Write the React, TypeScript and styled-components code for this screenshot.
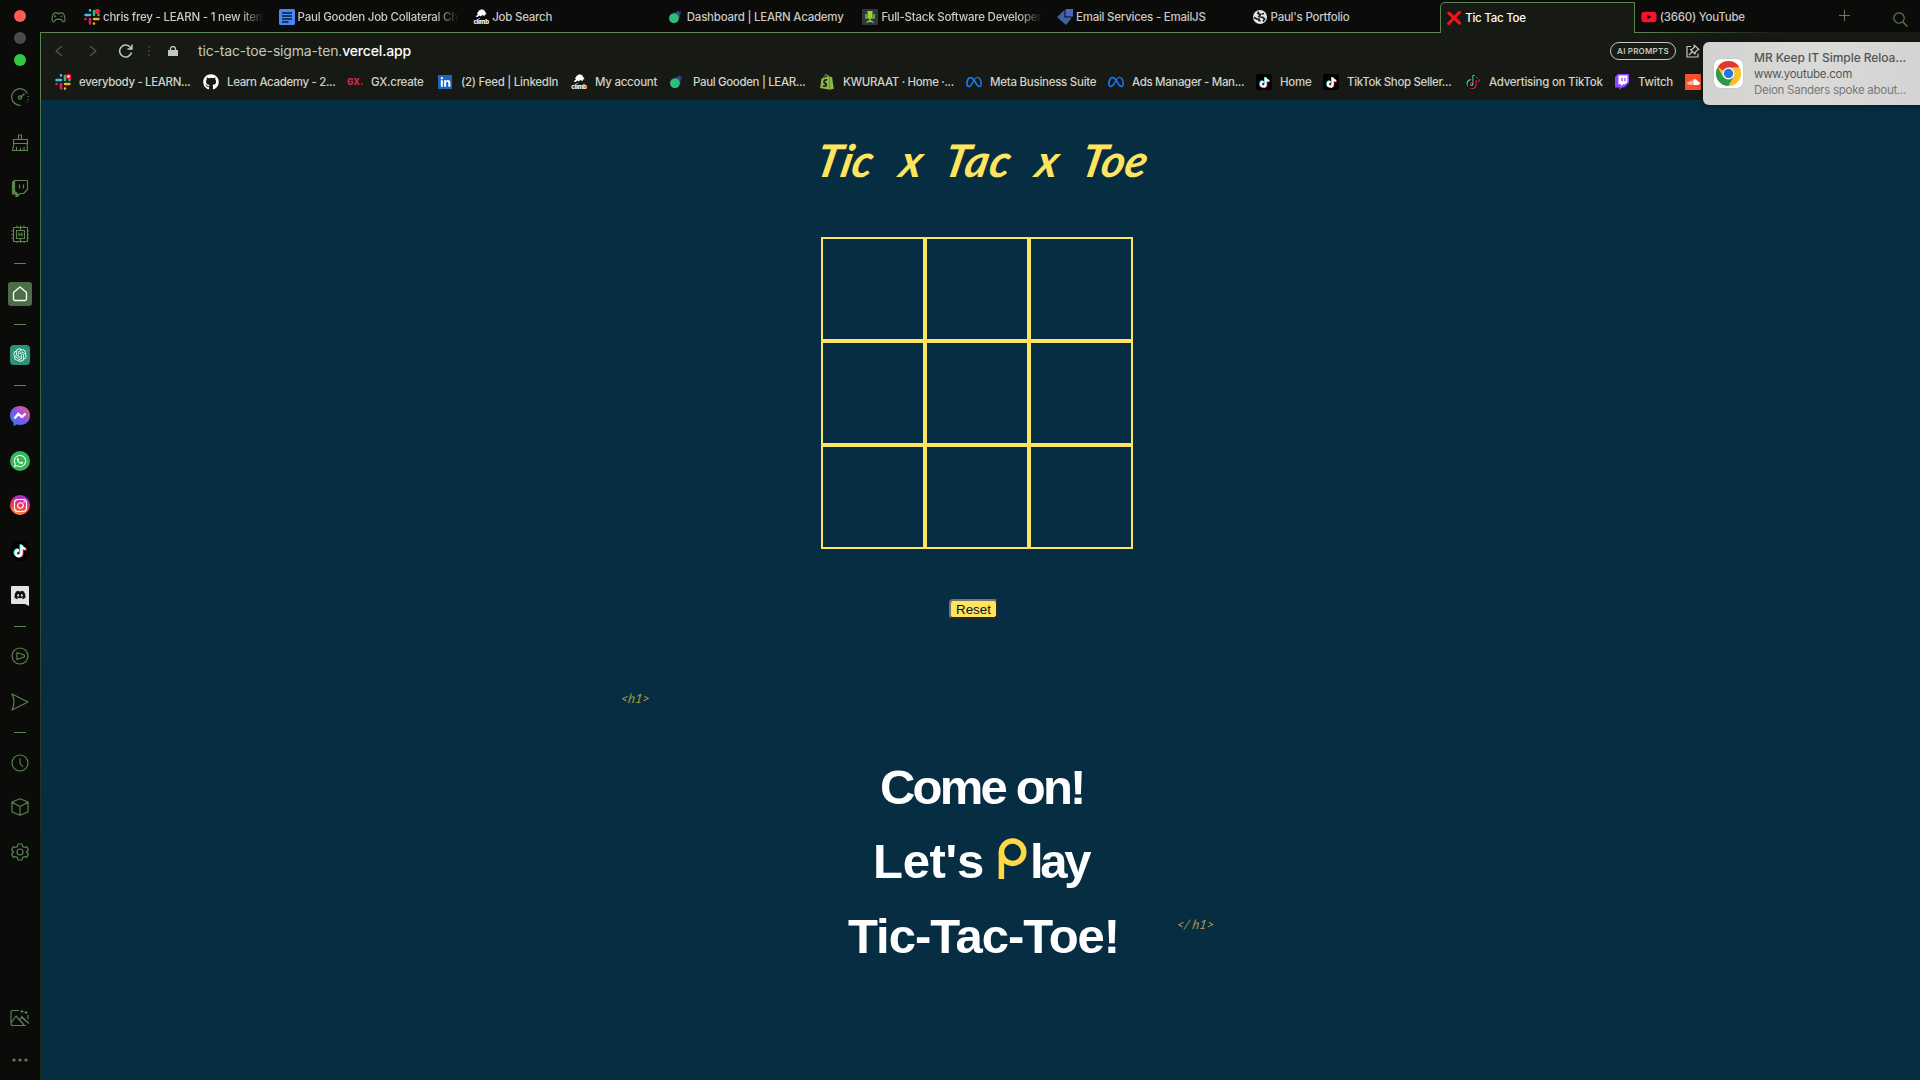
import React from 'react';
import styled, { createGlobalStyle } from 'styled-components';
import { FaGithub, FaLinkedinIn, FaSoundcloud, FaShopify, FaWhatsapp, FaInstagram, FaDiscord, FaYoutube, FaMeta } from 'react-icons/fa6';
import { RiOpenaiFill } from 'react-icons/ri';

const GREEN = '#5a8750';
const YELLOW = '#ffe45f';

const Global = createGlobalStyle`
  * { box-sizing: border-box; }
  html, body { margin: 0; padding: 0; background: #0b0b09; overflow: hidden; }
  body { font-family: Inter, Roboto, sans-serif; }
  svg { display: block; flex: none; }
`;

const Window = styled.div`
  display: grid;
  grid-template-columns: 40px 1fr;
  width: 1920px;
  height: 1080px;
  background: #0b0b09;
  position: relative;
  overflow: hidden;
`;
const Sidebar = styled.aside`
  display: flex;
  flex-direction: column;
  align-items: center;
  padding-top: 10px;
`;
const Light = styled.i<{ $color: string }>`
  width: 12px;
  height: 12px;
  border-radius: 50%;
  margin-bottom: 10px;
  background: ${p => p.$color};
  flex: none;
`;
const SideItem = styled.div<{ $gap: number; $bg?: string; $size?: number; $round?: string; $fg?: string }>`
  display: flex;
  align-items: center;
  justify-content: center;
  flex: none;
  margin-top: ${p => p.$gap}px;
  width: ${p => p.$size || 20}px;
  height: ${p => p.$size || 20}px;
  border-radius: ${p => p.$round || '0'};
  background: ${p => p.$bg || 'transparent'};
  color: ${p => p.$fg || GREEN};
`;
const Divider = styled.hr<{ $gap: number }>`
  width: 12px;
  height: 1px;
  border: 0;
  margin: ${p => p.$gap}px 0 0;
  background: ${GREEN};
  flex: none;
`;

const Main = styled.div`
  display: grid;
  grid-template-rows: 33px 67px 980px;
  min-width: 0;
`;
const TabStrip = styled.div`
  display: flex;
  height: 33px;
  background: linear-gradient(90deg, ${GREEN} 0 1600px, #171a14 1740px) bottom / 100% 1px no-repeat;
`;
const PadCell = styled.div`
  width: 38px;
  padding: 12px 0 0 11px;
  flex: none;
`;
const Tab = styled.div<{ $active?: boolean }>`
  display: flex;
  align-items: center;
  gap: 3px;
  flex: none;
  width: 194.6px;
  height: ${p => (p.$active ? 31 : 32)}px;
  margin-top: ${p => (p.$active ? 2 : 0)}px;
  padding: 2px 0 0 ${p => (p.$active ? 5 : 6)}px;
  ${p => p.$active && `
    padding-top: 0;
    background: #171a14;
    border: 1px solid ${GREEN};
    border-bottom: 0;
    border-radius: 5px 0 0 0;
    color: #fff;
  `}
`;
const TabText = styled.span<{ $fade?: boolean; $active?: boolean }>`
  width: 162px;
  overflow: hidden;
  white-space: nowrap;
  font-size: 11.5px;
  line-height: 16px;
  font-weight: 500;
  letter-spacing: -0.24px;
  color: ${p => (p.$active ? '#fff' : '#c8c8c4')};
  ${p => p.$fade && 'mask-image: linear-gradient(90deg, #000 138px, transparent 161px);'}
`;
const TabTool = styled.div<{ $left: number; $top: number }>`
  margin-left: ${p => p.$left}px;
  padding-top: ${p => p.$top}px;
`;

const Toolbar = styled.div`
  background: #171a14;
  border-left: 1px solid ${GREEN};
`;
const AddressRow = styled.div`
  display: flex;
  align-items: center;
  height: 36px;
  padding-left: 14px;
`;
const Url = styled.div`
  margin-left: 20px;
  width: 1412px;
  font-size: 14px;
  line-height: 20px;
  letter-spacing: -0.16px;
  color: #c3c8bd;
  b { font-weight: 500; color: #fff; }
`;
const Prompts = styled.div`
  width: 66px;
  height: 18px;
  border: 1px solid #c3c8bd;
  border-radius: 9px;
  color: #c3c8bd;
  font-size: 8px;
  font-weight: 600;
  line-height: 16px;
  text-align: center;
  letter-spacing: 0.22px;
  white-space: nowrap;
  margin-right: 10px;
`;
const Bookmarks = styled.div`
  display: flex;
  align-items: center;
  height: 26px;
  padding-left: 14px;
`;
const Bookmark = styled.div<{ $w: number }>`
  display: flex;
  align-items: center;
  gap: 8px;
  flex: none;
  width: ${p => p.$w}px;
`;
const BookmarkText = styled.span<{ $tight?: boolean }>`
  font-size: 11.5px;
  line-height: 16px;
  font-weight: 450;
  letter-spacing: ${p => (p.$tight ? -0.35 : -0.26)}px;
  white-space: nowrap;
  color: #cfd2c9;
`;
const IconBox = styled.span<{ $bg?: string; $fg?: string; $radius?: number; $size?: number }>`
  display: flex;
  align-items: center;
  justify-content: center;
  flex: none;
  width: ${p => p.$size || 16}px;
  height: ${p => p.$size || 16}px;
  margin: 0 ${p => (p.$size ? (16 - p.$size) / 2 : 0)}px;
  background: ${p => p.$bg || 'transparent'};
  color: ${p => p.$fg || '#fff'};
  border-radius: ${p => p.$radius || 0}px;
`;
const GxMark = styled.span`
  font-size: 8.5px;
  font-weight: 800;
  color: #e0234e;
  letter-spacing: 0.1px;
`;
const ClimbMark = styled.span`
  display: flex;
  flex-direction: column;
  align-items: center;
  width: 16px;
  height: 16px;
  flex: none;
  color: #fff;
  font-size: 6px;
  font-weight: 800;
  line-height: 5px;
  letter-spacing: -0.2px;
`;

const Page = styled.main`
  background: #062d42;
  border-left: 1px solid;
  border-image: linear-gradient(#4d7746, #35583d 45%, #1c2f1c 75%) 1;
  padding-top: 36px;
`;
const Title = styled.h1`
  display: flex;
  height: 60px;
  margin: 0 0 0 775px;
  font-family: Lato, sans-serif;
  font-style: italic;
  font-weight: 700;
  font-size: 45px;
  line-height: 48px;
  color: ${YELLOW};
`;
const Word = styled.span<{ $w: number; $ls?: number }>`
  width: ${p => p.$w}px;
  flex: none;
  white-space: pre;
  letter-spacing: ${p => p.$ls || 0}px;
  transform: skewX(-12deg);
`;
const Board = styled.div`
  display: grid;
  grid-template-columns: repeat(3, 104px);
  grid-auto-rows: 104px;
  width: 312px;
  margin: 41px 0 0 780px;
`;
const Square = styled.div`
  border: 2px solid ${YELLOW};
`;
const Reset = styled.button`
  display: block;
  width: 49px;
  height: 20px;
  margin: 50px 0 0 908px;
  padding: 0;
  border: 2px solid;
  border-color: #77756d #2b2b26 #2b2b26 #77756d;
  border-radius: 4px;
  background: ${YELLOW};
  color: #111;
  font: 13.33px/15px "Liberation Sans", Arial, sans-serif;
`;
const Tag = styled.div`
  font-family: Lato, sans-serif;
  font-style: italic;
  font-weight: 400;
  font-size: 13px;
  line-height: 16px;
  color: #a39c3d;
  white-space: pre;
  transform: skewX(-10deg);
`;
const OpenTag = styled(Tag)`
  margin: 71px 0 0 580px;
  letter-spacing: -0.2px;
`;
const CloseTag = styled(Tag)`
  margin: 0 0 41px 60px;
  letter-spacing: -0.1px;
`;
const Hero = styled.section`
  display: flex;
  align-items: flex-end;
  margin: 44px 0 0 801px;
`;
const HeroText = styled.h2`
  width: 275px;
  margin: 0;
  font-family: "Liberation Sans", Arial, sans-serif;
  font-weight: 700;
  font-size: 49px;
  line-height: 74.3px;
  color: #fff;
`;
const HeroLine = styled.div<{ $ls: number; $left: number }>`
  display: flex;
  padding-left: ${p => p.$left}px;
  letter-spacing: ${p => p.$ls}px;
  white-space: pre;
  height: 74.3px;
`;
const Ending = styled.span`
  letter-spacing: -3.3px;
`;
const LogoSlot = styled.span`
  padding-top: 14px;
  margin: 0 3px 0 14px;
`;

const Toast = styled.div`
  position: absolute;
  left: 1703px;
  top: 42px;
  width: 225px;
  height: 63px;
  display: flex;
  align-items: center;
  border-radius: 6px;
  background: linear-gradient(90deg, #d2d3d1, #dadad9 50%, #d2d3d2);
  box-shadow: 0 1px 6px rgba(0, 0, 0, 0.45);
  padding-left: 11px;
  gap: 11px;
`;
const ChromeTile = styled.div`
  width: 29px;
  height: 29px;
  border-radius: 6px;
  background: #fff;
  display: flex;
  align-items: center;
  justify-content: center;
  box-shadow: 0 0 1px #888;
`;
const ToastBody = styled.div`
  padding-top: 1px;
`;
const ToastLine = styled.div<{ $size: number; $color: string; $ls: number; $weight?: number }>`
  font-size: ${p => p.$size}px;
  line-height: 16.3px;
  color: ${p => p.$color};
  letter-spacing: ${p => p.$ls}px;
  font-weight: ${p => p.$weight || 400};
  white-space: nowrap;
`;

const Slack = ({ badge }: { badge?: boolean }) => (
  <svg width="16" height="16" viewBox="0 0 16 16" strokeWidth="2.6" strokeLinecap="round" fill="none">
    <path d="M6 1.4v.1M1.6 6H6" stroke="#36c5f0" />
    <path d="M10 2v4M14.4 6h.1" stroke="#2eb67d" />
    <path d="M10 10h4.4M10 14.5v.1" stroke="#ecb22e" />
    <path d="M6 10v4.4M1.5 10h.1" stroke="#e01e5a" />
    {badge ? (
      <>
        <rect x="11" y="0" width="5" height="5" rx="1" fill="#e8132b" />
        <circle cx="13.5" cy="2.5" r="1.2" fill="#fff" />
      </>
    ) : (
      <circle cx="13.4" cy="2.4" r="2.6" fill="#ff1c2e" />
    )}
  </svg>
);
const Docs = () => (
  <svg width="16" height="16" viewBox="0 0 16 16">
    <rect width="16" height="16" rx="1.5" fill="#4688f4" />
    <path d="M3 4h10M3 7h10M3 10h10M3 13h6.500" stroke="#0d1a33" strokeWidth="1.5" />
  </svg>
);
const Climb = () => (
  <ClimbMark>
    <svg width="14" height="10" viewBox="0 0 14 10"><path d="M1.500 7.500 4 5.500 3 4.500 5 1.500 7.500.2 10 1 12.500 5 10.500 6 11 7.500 8.500 6 6.500 7.500 5.500 6.500 3.500 8z" fill="#fff" /></svg>
    climb
  </ClimbMark>
);
const Comet = () => (
  <svg width="16" height="16" viewBox="0 0 16 16">
    <path d="M2 6 6 3l2 .5L11 1v1.500L13.500 2l-1 3-1 2 .5 1-2 3-2 3z" fill="#22307d" />
    <path d="m7 5.500 3.500-2.500M8.500 7.500l3-2.500M9 9.500l2-2" stroke="#2ea08c" strokeWidth="1" />
    <circle cx="5.900" cy="9.300" r="4.900" fill="#2fbd7c" />
  </svg>
);
const Chair = () => (
  <svg width="16" height="16" viewBox="0 0 16 16">
    <rect width="16" height="16" rx="1" fill="#2c3840" />
    <path d="M4 5v4h8V5M8 9v4M4.500 13.500 8 11.500l3.500 2" stroke="#9bd52c" strokeWidth="1.2" fill="none" />
    <path d="M5.500 2h5v7h-5z" fill="#9bd52c" />
  </svg>
);
const EmailMark = () => (
  <svg width="16" height="16" viewBox="0 0 16 16">
    <path d="M7.500 1v7.500H15L9 16 0 8z" fill="#4460a5" />
    <path d="M8.500 0H16v7.500H8.500z" fill="#4a68b2" />
  </svg>
);
const Globe = () => (
  <svg width="14" height="14" viewBox="0 0 14 14">
    <circle cx="7" cy="7" r="7" fill="#e4e6ea" />
    <path d="M1 7.200 3.500 9H6l0 1.500 1.500.5M5.500 1.500l-.5 2 2.500 1L6 6.500l4 1 1.500 1.500L10 11.500M11 3.500l-2 .5" stroke="#151719" strokeWidth="1.700" fill="none" />
  </svg>
);
const RedX = () => (
  <svg width="14" height="14" viewBox="0 0 14 14"><path d="M2 2.200 12.500 12M12.300 1.500 1.700 12.500" stroke="#ef1420" strokeWidth="3.200" strokeLinecap="round" /></svg>
);
const Twitch = () => (
  <svg width="16" height="16" viewBox="0 0 16 16">
    <path d="M4 0h11v9l-5 4.500H8L5.500 16v-2.500H1V3z" fill="#9146ff" />
    <path d="M4.500 1.500h9v6.500l-2.300 2.300H9L7 12.200v-1.900H4.500z" fill="#fff" />
    <path d="M8 3.700v3.500M11 3.700v3.500" stroke="#9146ff" strokeWidth="1.300" />
  </svg>
);
const NOTE = 'M16 3h-3.500v12.300a2.700 2.700 0 1 1-2.700-2.700c.3 0 .5 0 .8.1V9.100a6.200 6.200 0 1 0 5.400 6.200V9a8 8 0 0 0 4.500 1.400V7A4.500 4.500 0 0 1 16 3z';
const Tiktok = ({ size, face = '#fff' }: { size: number; face?: string }) => (
  <svg width={size} height={size} viewBox="0 0 24 24">
    <path transform="translate(-1.3 -1)" fill="#25f4ee" d={NOTE} />
    <path transform="translate(1.3 1)" fill="#fe2c55" d={NOTE} />
    <path fill={face} d={NOTE} />
  </svg>
);
const Chrome = () => (
  <svg width="25" height="25" viewBox="0 0 24 24">
    <circle cx="12" cy="12" r="12" fill="#fbc02d" />
    <path d="M12 12 1.600 6A12 12 0 0 1 22.400 6L12 6.500z" fill="#df3a30" />
    <path d="M1.600 6A12 12 0 0 0 12 24l5.200-9L12 12 6.800 15z" fill="#2c9a4b" />
    <path d="M12 6.500h10.600A12 12 0 0 1 12 24l5-9z" fill="#fbc02d" />
    <circle cx="12" cy="12" r="5.700" fill="#fff" />
    <circle cx="12" cy="12" r="4.500" fill="#2475e8" />
  </svg>
);
const Line = ({ d, size = 18, color = GREEN, w = 1.15, children }: { d?: string; size?: number; color?: string; w?: number; children?: React.ReactNode }) => (
  <svg width={size} height={size} viewBox={`0 0 ${size} ${size}`} fill="none" stroke={color} strokeWidth={w} strokeLinejoin="round">
    {d && <path d={d} />}
    {children}
  </svg>
);

type Mark = { icon: React.ReactNode; text: string; w: number };
const bookmarks: Mark[] = [
  { icon: <Slack badge />, text: 'everybody - LEARN...', w: 148 },
  { icon: <FaGithub size={16} color="#fff" />, text: 'Learn Academy - 2...', w: 144 },
  { icon: <IconBox><GxMark>GX.</GxMark></IconBox>, text: 'GX.create', w: 90 },
  { icon: <IconBox $bg="#1d65c0" $size={14}><FaLinkedinIn size={11} /></IconBox>, text: '(2) Feed | LinkedIn', w: 134 },
  { icon: <Climb />, text: 'My account', w: 98 },
  { icon: <Comet />, text: 'Paul Gooden | LEAR...', w: 150 },
  { icon: <IconBox $fg="#8cb84a"><FaShopify size={16} /></IconBox>, text: 'KWURAAT · Home ·...', w: 147 },
  { icon: <IconBox $fg="#1877f2"><FaMeta size={16} /></IconBox>, text: 'Meta Business Suite', w: 142 },
  { icon: <IconBox $fg="#1877f2"><FaMeta size={16} /></IconBox>, text: 'Ads Manager - Man...', w: 148 },
  { icon: <IconBox $bg="#000" $radius={3}><Tiktok size={13} /></IconBox>, text: 'Home', w: 67 },
  { icon: <IconBox $bg="#000" $radius={3}><Tiktok size={13} /></IconBox>, text: 'TikTok Shop Seller...', w: 142 },
  { icon: <Tiktok size={16} face="#11130f" />, text: 'Advertising on TikTok', w: 149 },
  { icon: <Twitch />, text: 'Twitch', w: 71 },
  { icon: <IconBox $bg="#f9502a"><FaSoundcloud size={13} /></IconBox>, text: '', w: 16 },
];

type TabInfo = { icon: React.ReactNode; text: string; fade?: boolean; active?: boolean };
const tabs: TabInfo[] = [
  { icon: <Slack />, text: 'chris frey - LEARN - 1 new item', fade: true },
  { icon: <Docs />, text: 'Paul Gooden Job Collateral Ch', fade: true },
  { icon: <Climb />, text: 'Job Search' },
  { icon: <Comet />, text: 'Dashboard | LEARN Academy' },
  { icon: <Chair />, text: 'Full-Stack Software Developer', fade: true },
  { icon: <EmailMark />, text: 'Email Services - EmailJS' },
  { icon: <IconBox><Globe /></IconBox>, text: "Paul's Portfolio" },
  { icon: <IconBox><RedX /></IconBox>, text: 'Tic Tac Toe', active: true },
  { icon: <IconBox $fg="#fa1130"><FaYoutube size={16} /></IconBox>, text: '(3660) YouTube' },
];

export default function App() {
  return (
    <>
      <Global />
      <Window>
        <Sidebar>
          <Light $color="#fe5b52" />
          <Light $color="#4a4a48" />
          <Light $color="#32c846" />
          <SideItem $gap={11}>
            <Line d="M9.500 17.300A8.300 8.300 0 1 1 16.500 5.500M9.500 9.500l4-4M17.300 8v1M17.300 11v1M16.500 13v.8"><circle cx="9" cy="9.500" r="1.600" /></Line>
          </SideItem>
          <SideItem $gap={26}><Line d="M7.500 5V1h3v4M2.500 5.500h14v4h-14zM3 9.500 1.500 16.500h15l-.5-7M5.500 13v3.500M13 13v3.500M9.500 14v2" /></SideItem>
          <SideItem $gap={25}><Line d="M3.500 1.500h13v9l-4 4h-3l-3 2.500v-2.500H3.500zM8.500 5.500v4M12.500 5.500v4"><path d="M1.500 3.500 3.500 1.500v11L6.500 14.500v3H5V15H1.500z" fill={GREEN} /></Line></SideItem>
          <SideItem $gap={26}><Line d="M2.500 2.500h14v14h-14zM5.500 5.500h8v8h-8zM8 7.500v4M11 7.500v4M8 9.500h3M6 .5v2M9.500 .5v5M13 .5v2M9.500 14v4M6 16.500v2M13 16.500v2M.5 6h2M.5 9.500h2M.5 13h2M16.500 6h2M16.500 9.500h2M16.500 13h2" /></SideItem>
          <Divider $gap={19} />
          <SideItem $gap={18} $size={24} $bg="#4b6e47" $round="3px"><Line size={16} color="#fff" w={1.3} d="M1.500 6.500 8 1l6.500 5.500V13a1.500 1.500 0 0 1-1.500 1.500H3A1.500 1.500 0 0 1 1.500 13z" /></SideItem>
          <Divider $gap={18} />
          <SideItem $gap={20} $bg="#2c9379" $fg="#e8fff8" $round="4px"><RiOpenaiFill size={16} /></SideItem>
          <Divider $gap={20} />
          <SideItem $gap={20}>
            <svg width="20" height="20" viewBox="0 0 20 20">
              <defs><linearGradient id="msg" x1="0" y1="1" x2="1" y2="0"><stop offset="0" stopColor="#168af5" /><stop offset=".5" stopColor="#8b50e8" /><stop offset="1" stopColor="#fa616b" /></linearGradient></defs>
              <path d="M10 0c6 0 10 4 10 9.500S16 19 10 19l-3-.4L3.500 20v-3.500C1.300 14.700 0 12.500 0 9.500 0 4 4 0 10 0z" fill="url(#msg)" />
              <path d="m4.500 12.500 3.700-4.500L12 11l3.500-3.500" fill="none" stroke="#fff" strokeWidth="2.400" />
            </svg>
          </SideItem>
          <SideItem $gap={25} $bg="#35b858" $fg="#fff" $round="50%"><FaWhatsapp size={14} /></SideItem>
          <SideItem $gap={24} $bg="linear-gradient(15deg, #fdb944, #f53b45 40%, #c62fae 72%, #6c42df)" $fg="#fff" $round="50%"><FaInstagram size={15} /></SideItem>
          <SideItem $gap={26} $bg="#000" $round="50%"><Tiktok size={16} /></SideItem>
          <SideItem $gap={25}>
            <Line size={20} color="none"><path d="M2 0h16q1 0 1 1v19l-4-2H2q-1 0-1-1V1q0-1 1-1z" fill="#e4e2e5" /><g transform="translate(4 3)"><FaDiscord size={12} color="#111" /></g></Line>
          </SideItem>
          <Divider $gap={20} />
          <SideItem $gap={19}><Line d="M6 5.500v7l7-2.500q1-1 0-2z"><circle cx="9" cy="9" r="8" /></Line></SideItem>
          <SideItem $gap={26}><Line d="M1 1l16 8L1 17q4-8 0-16z" /></SideItem>
          <Divider $gap={20} />
          <SideItem $gap={20}><Line d="M9 4.500v5l3 3.500"><circle cx="9" cy="9" r="8" /></Line></SideItem>
          <SideItem $gap={24}><Line d="M9 .8 17 4v10L9 17.300 1 14V4zM1 4.200l8 4.300 8-4.300M9 8.500v8.500" /></SideItem>
          <SideItem $gap={25}>
            <Line d="M7 1h4l.5 2.500 2 1 2.300-1L17.300 7l-1.800 2 1.800 2-1.500 3.500-2.300-1-2 1L11 17H7l-.5-2.500-2-1-2.300 1L.7 11l1.800-2L.7 7l1.500-3.500 2.300 1 2-1z"><circle cx="9" cy="9" r="3" /></Line>
          </SideItem>
          <SideItem $gap={146}>
            <Line size={20} d="M9 2.500H3q-2 0-2 2v11q0 2 2 2h13M18 7v4M1 15l5-7 8 9M9 12l3-2.500 4.500 4M11 8l8 7.500M12 2v3M10.500 3.500h3M16 3v3M14.500 4.500h3" />
          </SideItem>
          <SideItem $gap={22}><Line size={18}><g fill={GREEN} stroke="none"><circle cx="3" cy="9" r="1.600" /><circle cx="9" cy="9" r="1.600" /><circle cx="15" cy="9" r="1.600" /></g></Line></SideItem>
        </Sidebar>

        <Main>
          <TabStrip>
            <PadCell>
              <Line size={15} d="M4 .8h2l.8.8h1.500L9 .8h2c1.500 0 2.500 2 3 6.500.2 3-1.700 3-2.700 1.500L10 7.300H5L3.700 8.800C2.700 10.300.8 10.300 1 7.300 1.500 2.800 2.500.8 4 .8zM3.200 4.200h2M4.200 3.200v2M9.500 4.200h2" />
            </PadCell>
            {tabs.map(t => (
              <Tab key={t.text} $active={t.active}>
                {t.icon}
                <TabText $fade={t.fade} $active={t.active}>{t.text}</TabText>
              </Tab>
            ))}
            <TabTool $left={10} $top={10}><Line size={12} w={1} d="M5.500 0v11M0 5.500h11" /></TabTool>
            <TabTool $left={42} $top={12}><Line size={15} d="M10 10l4.500 4.500"><circle cx="6" cy="6" r="5.200" /></Line></TabTool>
          </TabStrip>

          <Toolbar>
            <AddressRow>
              <Line size={10} color="#55584f" w={1.200} d="M7 0 1 5l6 5" />
              <TabTool $left={24} $top={0}><Line size={10} color="#55584f" w={1.200} d="M1 0l6 5-6 5" /></TabTool>
              <TabTool $left={20} $top={0}><Line size={14} color="#c3c8bd" w={1.500} d="M12.500 8.500A6 6 0 1 1 11.500 3.500L13 5M13 .5V5H8.500" /></TabTool>
              <TabTool $left={15} $top={0}><Line size={12} color="#3d4039" w={1.500} d="M1 1v2M1 5v2M1 9v2" /></TabTool>
              <TabTool $left={8} $top={0}><Line size={10} color="none"><path d="M0 4h10v6H0z" fill="#c3c8bd" /><path d="M2.500 5V3a2.500 2.500 0 0 1 5 0v2" stroke="#c3c8bd" strokeWidth="1.300" /></Line></TabTool>
              <Url>tic-tac-toe-sigma-ten.<b>vercel.app</b></Url>
              <Prompts>AI PROMPTS</Prompts>
              <Line size={14} color="#c3c8bd" w={1.200} d="M5 2.500H1v10.500h11V9.500M8 1l5 4.500-1.500.5-2 2-.5 2-4.500-4.500 2-.5 2-2zM6.500 7.500 3 11" />
            </AddressRow>
            <Bookmarks>
              {bookmarks.map((b, i) => (
                <Bookmark key={i} $w={b.w}>
                  {b.icon}
                  {b.text && <BookmarkText $tight={b.text.endsWith('...')}>{b.text}</BookmarkText>}
                </Bookmark>
              ))}
            </Bookmarks>
          </Toolbar>

          <Page>
            <Title>
              <Word $w={84}>Tic </Word>
              <Word $w={44}>x </Word>
              <Word $w={92} $ls={1}>Tac </Word>
              <Word $w={45}>x </Word>
              <Word $w={70}>Toe</Word>
            </Title>
            <Board>{Array.from({ length: 9 }, (_, i) => <Square key={i} />)}</Board>
            <Reset>Reset</Reset>
            <OpenTag>&lt;h1&gt;</OpenTag>
            <Hero>
              <HeroText>
                <HeroLine $left={38} $ls={-2.8}>Come on!</HeroLine>
                <HeroLine $left={31} $ls={-0.3}>
                  Let's
                  <LogoSlot>
                    <svg width="29" height="42" viewBox="0 0 29 42" fill="none" stroke="#ffd844" strokeWidth="5.500">
                      <circle cx="14.600" cy="14.200" r="11.200" />
                      <path d="M3.400 14v27" />
                    </svg>
                  </LogoSlot>
                  <Ending>lay</Ending>
                </HeroLine>
                <HeroLine $left={6} $ls={-1}>Tic-Tac-Toe!</HeroLine>
              </HeroText>
              <CloseTag>&lt;/ h1&gt;</CloseTag>
            </Hero>
          </Page>
        </Main>

        <Toast>
          <ChromeTile><Chrome /></ChromeTile>
          <ToastBody>
            <ToastLine $size={12} $color="#555654" $ls={-0.06} $weight={500}>MR Keep IT Simple Reloa...</ToastLine>
            <ToastLine $size={11.5} $color="#555654" $ls={-0.25}>www.youtube.com</ToastLine>
            <ToastLine $size={11.5} $color="#777876" $ls={-0.27}>Deion Sanders spoke about...</ToastLine>
          </ToastBody>
        </Toast>
      </Window>
    </>
  );
}
